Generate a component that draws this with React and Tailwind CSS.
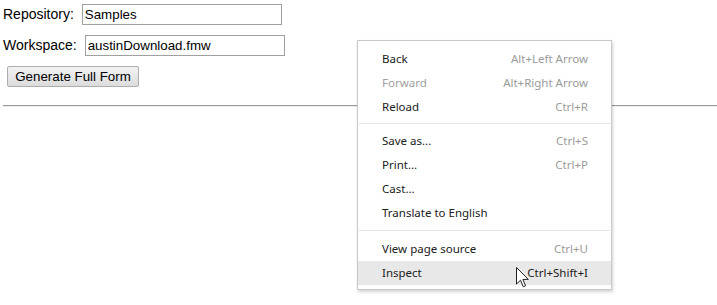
import React from "react";

const items = [
  { label: "Back", shortcut: "Alt+Left Arrow" },
  { label: "Forward", shortcut: "Alt+Right Arrow", disabled: true },
  { label: "Reload", shortcut: "Ctrl+R" },
  { sep: true, cls: "mt-[4px] mb-[5px]" },
  { label: "Save as...", shortcut: "Ctrl+S" },
  { label: "Print...", shortcut: "Ctrl+P" },
  { label: "Cast..." },
  { label: "Translate to English" },
  { sep: true, cls: "mt-[5px] mb-[6px]" },
  { label: "View page source", shortcut: "Ctrl+U" },
  { label: "Inspect", shortcut: "Ctrl+Shift+I", active: true },
];

export default function App() {
  return (
    <div className="relative w-[717px] h-[305px] bg-white overflow-hidden" style={{ fontFamily: "Arial, 'Liberation Sans', sans-serif" }}>
      <div className="flex flex-col items-start pt-[4px] gap-[10px]">
        <div className="flex items-center gap-[8px] pl-[3px] h-[21px]">
          <span className="text-[14px] text-black" style={{ fontFamily: "'Liberation Sans', Arial, sans-serif" }}>Repository:</span>
          <div className="w-[200px] h-[21px] border border-[#a0a0a0] pl-[2px] flex items-center text-[13.33px] text-black" style={{ fontFamily: "'Liberation Sans', Arial, sans-serif" }}>Samples</div>
        </div>
        <div className="flex items-center gap-[8px] pl-[3px] h-[21px]">
          <span className="text-[14px] text-black" style={{ fontFamily: "'Liberation Sans', Arial, sans-serif" }}>Workspace:</span>
          <div className="w-[200px] h-[21px] border border-[#a0a0a0] pl-[2px] flex items-center text-[13.33px] text-black" style={{ fontFamily: "'Liberation Sans', Arial, sans-serif" }}>austinDownload.fmw</div>
        </div>
        <button className="ml-[7px] w-[132px] h-[21px] border border-[#adadad] rounded-[2px] bg-gradient-to-b from-[#f2f2f2] to-[#dcdcdc] text-[13.33px] text-black flex items-center justify-center" style={{ fontFamily: "'Liberation Sans', Arial, sans-serif" }}>
          Generate Full Form
        </button>
      </div>
      <div className="ml-[3px] mt-[18px] h-[2px] border-t border-[#9a9a9a] border-b border-b-[#eeeeee]" />

      <div className="absolute left-[357px] top-[40px] w-[255px] bg-white border border-[#c8c8c8] pt-[6px] pb-[4px] shadow-[1px_2px_3px_rgba(0,0,0,0.18)]" style={{ fontFamily: "'Noto Sans', 'Open Sans', sans-serif" }}>
        {items.map((it, i) =>
          it.sep ? (
            <div key={i} className={`h-px mx-[1px] bg-[#e3e3e3] ${it.cls}`} />
          ) : (
            <div key={i} className={`h-[24px] flex items-center justify-between pl-[24px] pr-[23px] text-[11.5px] ${it.active ? "bg-[#e8e8e8]" : ""}`}>
              <span className={it.disabled ? "text-[#a0a0a0]" : "text-[#202020]"}>{it.label}</span>
              {it.shortcut && <span className={it.active ? "text-[#202020]" : "text-[#9a9a9a]"}>{it.shortcut}</span>}
            </div>
          )
        )}
      </div>

      <svg className="absolute left-[516px] top-[267px]" width="14" height="23" viewBox="0 0 14 23">
        <path d="M0.5 0.5 L0.5 17 L4.5 13.2 L7.3 19.8 L9.6 18.8 L6.9 12.4 L12.3 12.4 Z" fill="white" stroke="#222" strokeWidth="1" strokeLinejoin="round" />
      </svg>
    </div>
  );
}
